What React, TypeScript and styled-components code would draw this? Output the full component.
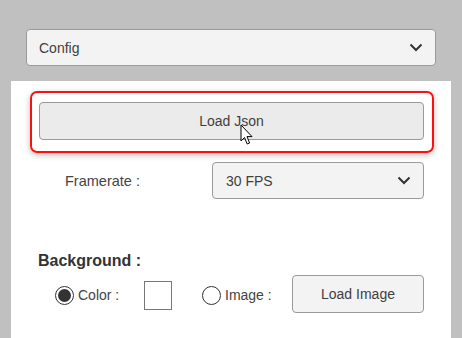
import React from 'react';
import styled, { createGlobalStyle } from 'styled-components';

const GlobalStyle = createGlobalStyle`
  html, body {
    margin: 0;
    padding: 0;
    background: #c0c0c0;
    font-family: 'Liberation Sans', Arial, sans-serif;
  }
`;

const Page = styled.div`
  width: 462px;
  height: 338px;
  overflow: hidden;
  padding-top: 29px;
  box-sizing: border-box;
  position: relative;
`;

const SelectBox = styled.div<{ $width: number; $padLeft: number }>`
  box-sizing: border-box;
  width: ${(p) => p.$width}px;
  height: 37px;
  background: #f3f3f3;
  border: 1px solid #9a9a9a;
  border-radius: 4px;
  display: flex;
  align-items: center;
  justify-content: space-between;
  padding: 0 12px 0 ${(p) => p.$padLeft}px;
  font-size: 14px;
  color: #3f3f3f;
`;

const TopSelectWrap = styled.div`
  padding-left: 26px;
`;

const Panel = styled.div`
  margin: 15px 0 0 11px;
  width: 440px;
  height: 260px;
  background: #ffffff;
  padding: 10px 0 0 19px;
  box-sizing: border-box;
`;

const Highlight = styled.div`
  box-sizing: border-box;
  width: 404px;
  height: 62px;
  border: 2px solid #ff1010;
  border-radius: 7px;
  padding: 9px 0 0 7px;
  box-shadow: 0 2px 6px rgba(0, 0, 0, 0.25);
`;

const Button = styled.div<{ $width: number; $bg: string }>`
  box-sizing: border-box;
  width: ${(p) => p.$width}px;
  height: 38px;
  background: ${(p) => p.$bg};
  border: 1px solid #9a9a9a;
  border-radius: 4px;
  display: flex;
  align-items: center;
  justify-content: center;
  font-size: 14px;
  color: #3f3f3f;
`;

const FrameRow = styled.div`
  display: grid;
  grid-template-columns: 173px 212px;
  align-items: center;
  margin: 9px 0 0 9px;
`;

const Label = styled.span`
  padding-left: 26px;
  font-size: 14.5px;
  color: #444;
`;

const SectionTitle = styled.div`
  margin: 53px 0 0 8px;
  font-size: 16px;
  font-weight: bold;
  color: #333;
`;

const RadioRow = styled.div`
  display: grid;
  grid-template-columns: 89px 58px 90px 132px;
  align-items: center;
  margin: 5px 0 0 25px;
`;

const RadioItem = styled.label`
  display: flex;
  align-items: center;
  gap: 4px;
  font-size: 14px;
  color: #444;
  padding-top: 2px;
`;

const RadioCircle = styled.span<{ $checked?: boolean }>`
  box-sizing: border-box;
  width: 19px;
  height: 19px;
  border-radius: 50%;
  border: 1.5px solid #333;
  background: #fff;
  display: flex;
  align-items: center;
  justify-content: center;

  &::after {
    content: '';
    width: 13px;
    height: 13px;
    border-radius: 50%;
    background: ${(p) => (p.$checked ? '#333' : 'transparent')};
  }
`;

const Swatch = styled.span`
  box-sizing: border-box;
  width: 28px;
  height: 29px;
  margin-top: 3px;
  border: 1px solid #777;
  background: #fff;
`;

const Cursor = styled.svg`
  position: absolute;
  left: 240px;
  top: 124px;
`;

const Chevron = () => (
  <svg width="14" height="9" viewBox="0 0 14 9">
    <path d="M1.5 1.5 L7 7 L12.5 1.5" fill="none" stroke="#333" strokeWidth="2" />
  </svg>
);

export default function App() {
  return (
    <>
      <GlobalStyle />
      <Page>
        <TopSelectWrap>
          <SelectBox $width={410} $padLeft={12}>
            <span>Config</span>
            <Chevron />
          </SelectBox>
        </TopSelectWrap>
        <Panel>
          <Highlight>
            <Button $width={385} $bg="#ebebeb">Load Json</Button>
          </Highlight>
          <FrameRow>
            <Label>Framerate :</Label>
            <SelectBox $width={212} $padLeft={13}>
              <span>30 FPS</span>
              <Chevron />
            </SelectBox>
          </FrameRow>
          <SectionTitle>Background :</SectionTitle>
          <RadioRow>
            <RadioItem>
              <RadioCircle $checked />
              Color :
            </RadioItem>
            <Swatch />
            <RadioItem>
              <RadioCircle />
              Image :
            </RadioItem>
            <Button $width={132} $bg="#f3f3f3">Load Image</Button>
          </RadioRow>
        </Panel>
        <Cursor width="14" height="22" viewBox="0 0 14 22">
          <path
            d="M1 1 L1 17 L4.5 13.5 L7.2 20 L9.6 19 L7 12.6 L12 12.6 Z"
            fill="#fff"
            stroke="#000"
            strokeWidth="1"
            strokeLinejoin="round"
          />
        </Cursor>
      </Page>
    </>
  );
}
